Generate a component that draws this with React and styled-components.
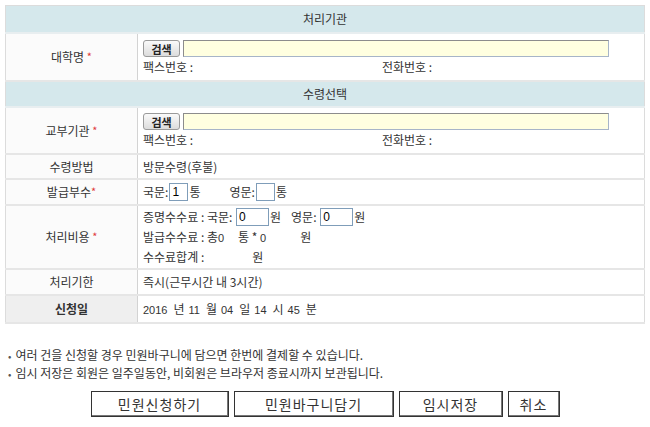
import styled, { createGlobalStyle } from 'styled-components'

const GlobalStyle = createGlobalStyle`
	body {
		margin: 0;
		background: #fff;
		font-family: "Noto Sans CJK KR", "Noto Sans", sans-serif;
		font-size: 12px;
		color: #333;
	}
`

export default function App() {
	return (
		<Page>
			<GlobalStyle />
			<FormTable>
				<colgroup>
					<col width="132" />
					<col />
				</colgroup>
				<tbody>
					<Row h={27}>
						<Head colSpan={2}>처리기관</Head>
					</Row>
					<Row h={48}>
						<Label>
							대학명 <Star>*</Star>
						</Label>
						<Cell>
							<SearchLine>
								<SearchButton>검색</SearchButton>
								<OrgInput />
							</SearchLine>
							<InfoLine>
								<span>팩스번호 :</span>
								<span>전화번호 :</span>
							</InfoLine>
						</Cell>
					</Row>
					<Row h={26}>
						<Head colSpan={2}>수령선택</Head>
					</Row>
					<Row h={47}>
						<Label>
							교부기관 <Star>*</Star>
						</Label>
						<Cell>
							<SearchLine>
								<SearchButton>검색</SearchButton>
								<OrgInput />
							</SearchLine>
							<InfoLine>
								<span>팩스번호 :</span>
								<span>전화번호 :</span>
							</InfoLine>
						</Cell>
					</Row>
					<Row h={25}>
						<Label>수령방법</Label>
						<Cell>방문수령(후불)</Cell>
					</Row>
					<Row h={26}>
						<Label>
							발급부수<Star>*</Star>
						</Label>
						<Cell>
							<Inline>
								국문:<SmallInput w={19} defaultValue="1" />통
								<Spacer w={29} />
								영문:<SmallInput w={19} />통
							</Inline>
						</Cell>
					</Row>
					<Row h={64}>
						<Label>
							처리비용 <Star>*</Star>
						</Label>
						<Cell>
							<FeeLines>
								<Inline>
									증명수수료 : 국문: <SmallInput w={33} defaultValue="0" />원
									<Spacer w={10} />
									영문: <SmallInput w={33} defaultValue="0" />원
								</Inline>
								<Inline>
									발급수수료 : 총<Num>0</Num>
									<Spacer w={14} />통 * <Num>0</Num>
									<Spacer w={34} />원
								</Inline>
								<Inline>
									수수료합계 :<Spacer w={48} />원
								</Inline>
							</FeeLines>
						</Cell>
					</Row>
					<Row h={26}>
						<Label>처리기한</Label>
						<Cell>즉시(근무시간 내 3시간)</Cell>
					</Row>
					<Row h={28}>
						<Label grey bold>
							신청일
						</Label>
						<Cell>
							<DateLine>
								<Num>2016</Num>년<Num>11</Num>월<Num>04</Num>일<Num>14</Num>시<Num>45</Num>분
							</DateLine>
						</Cell>
					</Row>
				</tbody>
			</FormTable>
			<Notes>
				<li>여러 건을 신청할 경우 민원바구니에 담으면 한번에 결제할 수 있습니다.</li>
				<li>임시 저장은 회원은 일주일동안, 비회원은 브라우저 종료시까지 보관됩니다.</li>
			</Notes>
			<ButtonBar>
				<ActionButton w={138}>민원신청하기</ActionButton>
				<ActionButton w={160}>민원바구니담기</ActionButton>
				<ActionButton w={104}>임시저장</ActionButton>
				<ActionButton w={52}>취소</ActionButton>
			</ButtonBar>
		</Page>
	)
}

const Page = styled.div`
	padding: 5px 5px 0;
	width: 640px;
`
const FormTable = styled.table`
	width: 640px;
	border-collapse: collapse;
	border: 1px solid #dcdcdc;
	table-layout: fixed;
`
const Row = styled.tr`
	height: ${(p) => p.h}px;
`
const Head = styled.td`
	background: #d5e8ec;
	text-align: center;
	color: #333;
	border-bottom: 2px solid #e8eef0;
	padding: 0;
`
const Label = styled.td`
	text-align: center;
	background: ${(p) => (p.grey ? '#efefef' : '#fbfbfb')};
	font-weight: ${(p) => (p.bold ? 'bold' : 'normal')};
	border-right: 1px solid #d3d3d3;
	border-bottom: 2px solid #e6e6e6;
	padding: 0;
`
const Star = styled.span`
	color: #e03a3a;
	font-size: 11px;
	position: relative;
	top: -1px;
`
const Cell = styled.td`
	padding: 0 0 0 5px;
	border-bottom: 2px solid #e6e6e6;
	background: #fff;
`
const SearchLine = styled.div`
	display: flex;
	align-items: center;
	gap: 3px;
	height: 17px;
`
const SearchButton = styled.button`
	width: 37px;
	height: 17px;
	padding: 0;
	font-family: inherit;
	font-size: 11px;
	font-weight: bold;
	color: #222;
	border: 1px solid #9a9a9a;
	border-radius: 3px;
	background: linear-gradient(#fafafa, #dcdcdc);
`
const OrgInput = styled.input`
	width: 426px;
	height: 17px;
	box-sizing: border-box;
	background: #ffffe0;
	border: 1px solid #a7b5c8;
	border-top-color: #8c8c8c;
	border-left-color: #8c8c8c;
	padding: 0;
`
const InfoLine = styled.div`
	display: flex;
	margin-top: 3px;
	line-height: 14px;
	span:first-child {
		width: 239px;
	}
`
const Inline = styled.div`
	display: flex;
	align-items: center;
	white-space: pre;
`
const SmallInput = styled.input`
	width: ${(p) => p.w}px;
	height: 18px;
	box-sizing: border-box;
	border: 1px solid #7f9db9;
	padding: 0 2px;
	margin: 0 1px;
	font-family: "Liberation Sans", sans-serif;
	font-size: 12px;
	color: #000;
`
const Spacer = styled.span`
	display: inline-block;
	width: ${(p) => p.w}px;
`
const FeeLines = styled.div`
	display: flex;
	flex-direction: column;
	gap: 2px;
	div {
		height: 18px;
	}
`
const Num = styled.span`
	font-family: "Liberation Sans", sans-serif;
	font-size: 11px;
	padding-top: 2px;
`
const DateLine = styled.div`
	white-space: pre;
	${Num} {
		margin: 0 6px 0 4px;
	}
	${Num}:first-child {
		margin-left: 0;
	}
`
const Notes = styled.ul`
	margin: 22px 0 0;
	padding: 0 0 0 3px;
	list-style: none;
	font-size: 12px;
	color: #333;
	li {
		line-height: 17px;
	}
	li::before {
		content: '•';
		color: #555;
		font-size: 10px;
		margin-right: 4px;
	}
`
const ButtonBar = styled.div`
	display: flex;
	justify-content: center;
	gap: 5px;
	margin-top: 9px;
`
const ActionButton = styled.button`
	width: ${(p) => p.w}px;
	height: 26px;
	padding: 0;
	background: #fff;
	border: 1px solid #333;
	box-shadow: inset -1px -1px 0 #777;
	font-family: inherit;
	font-size: 14px;
	letter-spacing: 1px;
	color: #333;
`
